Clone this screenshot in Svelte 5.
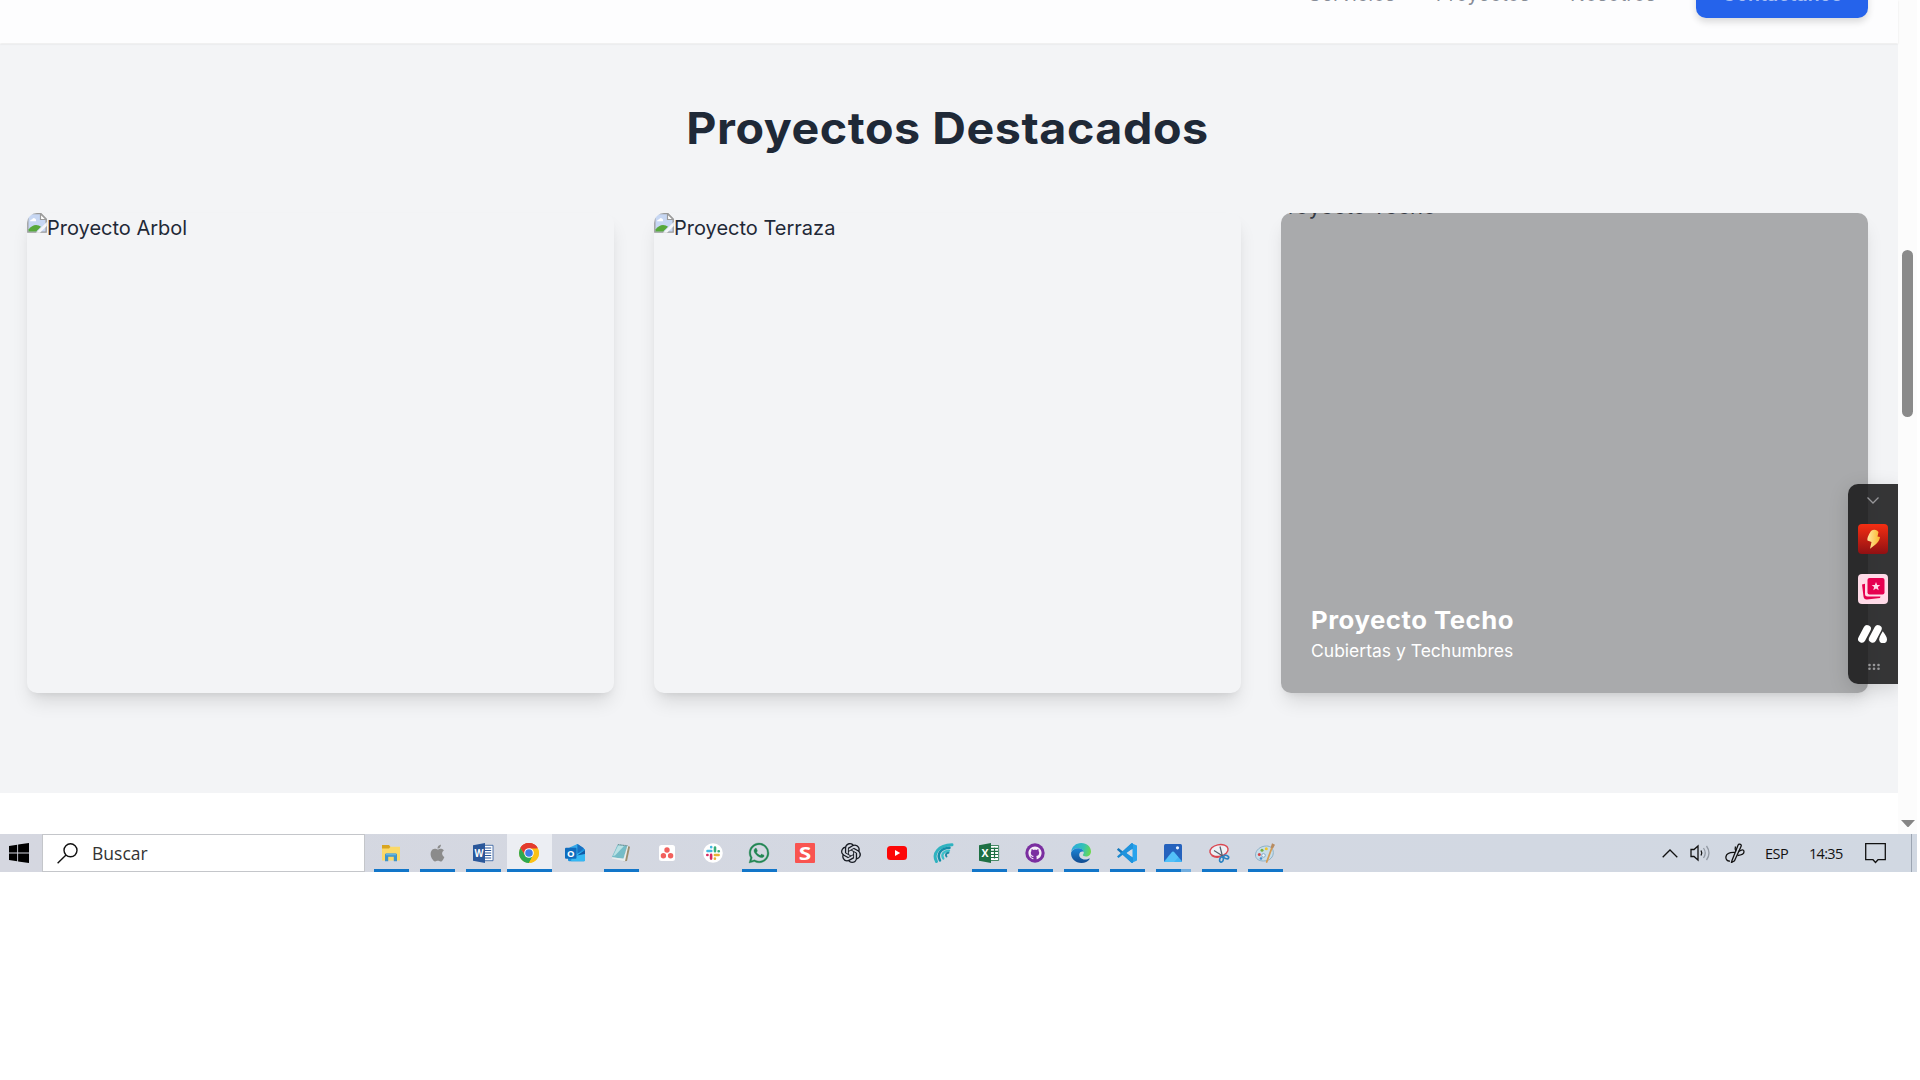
<script>
  const nav = ['Servicios', 'Proyectos', 'Nosotros'];
  const cards = [
    { alt: 'Proyecto Arbol' },
    { alt: 'Proyecto Terraza' },
    { alt: 'Proyecto Techo', title: 'Proyecto Techo', text: 'Cubiertas y Techumbres' }
  ];
  const apps = [
    { id: 'explorer', open: true },
    { id: 'apple', open: true },
    { id: 'word', open: true },
    { id: 'chrome', open: true, active: true },
    { id: 'outlook' },
    { id: 'notepad', open: true },
    { id: 'asana' },
    { id: 'slack' },
    { id: 'whatsapp', open: true },
    { id: 'snagit' },
    { id: 'openai' },
    { id: 'youtube' },
    { id: 'waves' },
    { id: 'excel', open: true },
    { id: 'github', open: true },
    { id: 'edge', open: true },
    { id: 'vscode', open: true },
    { id: 'photos', open: true, multi: true },
    { id: 'snip', open: true },
    { id: 'paint', open: true }
  ];
</script>

{#snippet icon(id)}
  <svg class="app-icon" viewBox="0 0 20 20">
    {#if id === 'explorer'}
      <path d="M1 2h7l1.500 2H18v4H1z" fill="#d9a520" />
      <path d="M1 5.500h7l1.500-1.700H19V17.500H1z" fill="#fbd968" />
      <path d="M4 18.300v-6.500q0-1.300 1.300-1.300h9.400q1.300 0 1.300 1.300v6.500h-3.200v-4.600H7.200v4.600z" fill="#3f93c9" />
      <path d="M5 10.500h10v1.800H5z" fill="#66b5dc" />
    {:else if id === 'apple'}
      <g transform="translate(2.100 1.700) scale(.7)" fill="#8b8b8b">
        <path d="M12.152 6.896c-.948 0-2.415-1.078-3.960-1.040-2.040.027-3.910 1.183-4.961 3.014-2.117 3.675-.546 9.103 1.519 12.090 1.013 1.454 2.208 3.090 3.792 3.039 1.520-.065 2.090-.987 3.935-.987 1.831 0 2.350.987 3.960.948 1.637-.026 2.676-1.480 3.676-2.948 1.156-1.688 1.636-3.325 1.662-3.415-.039-.013-3.182-1.221-3.220-4.857-.026-3.040 2.480-4.494 2.597-4.559-1.429-2.090-3.623-2.324-4.390-2.376-2-.156-3.675 1.090-4.610 1.090zM15.530 3.830c.843-1.012 1.400-2.427 1.245-3.830-1.207.052-2.662.805-3.532 1.818-.780.896-1.454 2.338-1.273 3.714 1.338.104 2.715-.688 3.559-1.701" />
      </g>
    {:else if id === 'word'}
      <path d="M11 2.300h9v15.400h-9z" fill="#fff" stroke="#2a579a" stroke-width=".8" />
      <path d="M12 5h6.200M12 7.500h6.200M12 10h6.200M12 12.500h6.200M12 15h6.200" stroke="#2a579a" stroke-width="1.100" />
      <path d="M0 2.200 12 0v20L0 17.800z" fill="#2a579a" />
      <text x="6" y="13.800" class="glyph" font-size="10.500" textLength="9" lengthAdjust="spacingAndGlyphs">W</text>
    {:else if id === 'chrome'}
      <circle cx="10" cy="10" r="10" fill="#fbc116" />
      <path d="M10 10 1.340 5A10 10 0 0 1 18.660 5z" fill="#e33b2e" />
      <path d="M10 5.400h8.900A10 10 0 0 0 1.340 5L6 12.300z" fill="#e33b2e" />
      <path d="M1.340 5A10 10 0 0 0 10 20l4-7.700-8 0z" fill="#2da94f" />
      <path d="M10 20a10 10 0 0 0 8.900-14.600H10l4 7z" fill="#fbc116" />
      <circle cx="10" cy="10" r="4.800" fill="#fff" />
      <circle cx="10" cy="10" r="3.800" fill="#3f7de8" />
    {:else if id === 'outlook'}
      <path d="M3 7.500 12.500 1 20 6.500V17q0 1.300-1.200 1.300H4.500Q3 18.300 3 17z" fill="#1590df" />
      <path d="M4.500 4.500 12.500 1v10h-8z" fill="#36a8e8" />
      <path d="M12.500 1 19 5.300 12.500 11z" fill="#1971c2" />
      <path d="M20 7v10.500q0 .8-1 .8H6l1-4.800z" fill="#35b8f3" />
      <path d="M12 12.500 20 7v4z" fill="#105ca7" />
      <rect x="0" y="4.800" width="11.500" height="11" rx="1" fill="#0f6cbd" />
      <text x="5.700" y="13.700" class="glyph" font-size="9.500">O</text>
    {:else if id === 'notepad'}
      <path d="m15.500 2.500 3.500 1.200-3 14.300-3.500.3z" fill="#9c8d6c" />
      <path d="M6.800 1.200 16.500 2.500 12.500 15.800.8 14.300z" fill="#75bcc7" />
      <path d="M7.200 2.300 13 3 4 12.500 2 13z" fill="#b9e1e4" />
      <path d="m1 14.300 11.500 1.500 3.800-13 1 .3-3.300 15.200L1 15.600z" fill="#e8eeee" />
      <path d="m7 1.600 9.600 1.200" stroke="#788f92" stroke-width="1.200" stroke-dasharray="1 .7" />
    {:else if id === 'asana'}
      <rect x="2" y="2" width="16" height="16" rx="2.500" fill="#fff" />
      <circle cx="10" cy="7" r="2.700" fill="#f2605d" />
      <circle cx="6.400" cy="12.800" r="2.700" fill="#f2605d" />
      <circle cx="13.600" cy="12.800" r="2.700" fill="#f2605d" />
    {:else if id === 'slack'}
      <circle cx="10" cy="10" r="9.800" fill="#fff" />
      <g stroke-width="2.600" stroke-linecap="round">
        <path d="M4.500 8h3.800M8.200 4v.2" stroke="#41b9df" />
        <path d="M12 4.500v3.700M15.800 8.200h-.2" stroke="#38ad79" />
        <path d="M11.900 12h3.700M11.900 15.700v-.2" stroke="#e7b036" />
        <path d="M8.100 11.900v3.700M4.300 12h.2" stroke="#d72860" />
      </g>
    {:else if id === 'whatsapp'}
      <g transform="scale(.833)" fill="#218653" stroke="#218653" stroke-width=".4">
        <path d="M17.472 14.382c-.297-.149-1.758-.867-2.030-.967-.273-.099-.471-.148-.670.150-.197.297-.767.966-.940 1.164-.173.199-.347.223-.644.075-.297-.150-1.255-.463-2.390-1.475-.883-.788-1.480-1.761-1.653-2.059-.173-.297-.018-.458.130-.606.134-.133.298-.347.446-.520.149-.174.198-.298.298-.497.099-.198.050-.371-.025-.520-.075-.149-.669-1.612-.916-2.207-.242-.579-.487-.500-.669-.510-.173-.008-.371-.010-.570-.010-.198 0-.520.074-.792.372-.272.297-1.040 1.016-1.040 2.479 0 1.462 1.065 2.875 1.213 3.074.149.198 2.096 3.200 5.077 4.487.709.306 1.262.489 1.694.625.712.227 1.360.195 1.871.118.571-.085 1.758-.719 2.006-1.413.248-.694.248-1.289.173-1.413-.074-.124-.272-.198-.570-.347m-5.421 7.403h-.004a9.870 9.870 0 01-5.031-1.378l-.361-.214-3.741.982.998-3.648-.235-.374a9.860 9.860 0 01-1.510-5.260c.001-5.450 4.436-9.884 9.888-9.884 2.640 0 5.122 1.030 6.988 2.898a9.825 9.825 0 012.893 6.994c-.003 5.450-4.437 9.884-9.885 9.884m8.413-18.297A11.815 11.815 0 0012.050 0C5.495 0 .160 5.335.157 11.892c0 2.096.547 4.142 1.588 5.945L.057 24l6.305-1.654a11.882 11.882 0 005.683 1.448h.005c6.554 0 11.890-5.335 11.893-11.893a11.821 11.821 0 00-3.480-8.413Z" />
      </g>
    {:else if id === 'snagit'}
      <rect width="20" height="20" rx="1" fill="#f95450" />
      <text x="10" y="16.500" class="glyph" font-size="18" textLength="12.500" lengthAdjust="spacingAndGlyphs">S</text>
    {:else if id === 'openai'}
      <g transform="scale(.833)" fill="#161a22">
        <path d="M22.2819 9.8211a5.9847 5.9847 0 0 0-.5157-4.9108 6.0462 6.0462 0 0 0-6.5098-2.9A6.0651 6.0651 0 0 0 4.9807 4.1818a5.9847 5.9847 0 0 0-3.9977 2.9 6.0462 6.0462 0 0 0 .7427 7.0966 5.98 5.98 0 0 0 .511 4.9107 6.051 6.051 0 0 0 6.5146 2.9001A5.9847 5.9847 0 0 0 13.2599 24a6.0557 6.0557 0 0 0 5.7718-4.2058 5.9894 5.9894 0 0 0 3.9977-2.9001 6.0557 6.0557 0 0 0-.7475-7.0729zm-9.022 12.6081a4.4755 4.4755 0 0 1-2.8764-1.0408l.1419-.0804 4.7783-2.7582a.7948.7948 0 0 0 .3927-.6813v-6.7369l2.02 1.1686a.071.071 0 0 1 .038.052v5.5826a4.504 4.504 0 0 1-4.4945 4.4944zm-9.6607-4.1254a4.4708 4.4708 0 0 1-.5346-3.0137l.142.0852 4.783 2.7582a.7712.7712 0 0 0 .7806 0l5.8428-3.3685v2.3324a.0804.0804 0 0 1-.0332.0615L9.74 19.9502a4.4992 4.4992 0 0 1-6.1408-1.6464zM2.3408 7.8956a4.485 4.485 0 0 1 2.3655-1.9728V11.6a.7664.7664 0 0 0 .3879.6765l5.8144 3.3543-2.0201 1.1685a.0757.0757 0 0 1-.071 0l-4.8303-2.7865A4.504 4.504 0 0 1 2.3408 7.872zm16.5963 3.8558L13.1038 8.364 15.1192 7.2a.0757.0757 0 0 1 .071 0l4.8303 2.7913a4.4944 4.4944 0 0 1-.6765 8.1042v-5.6772a.79.79 0 0 0-.407-.667zm2.0107-3.0231l-.142-.0852-4.7735-2.7818a.7759.7759 0 0 0-.7854 0L9.409 9.2297V6.8974a.0662.0662 0 0 1 .0284-.0615l4.8303-2.7866a4.4992 4.4992 0 0 1 6.6802 4.66zM8.3065 12.863l-2.02-1.1638a.0804.0804 0 0 1-.038-.0567V6.0742a4.4992 4.4992 0 0 1 7.3757-3.4537l-.142.0805L8.704 5.459a.7948.7948 0 0 0-.3927.6813zm1.0976-2.3654l2.602-1.4998 2.6069 1.4998v2.9994l-2.5974 1.4997-2.6067-1.4997Z" />
      </g>
    {:else if id === 'youtube'}
      <rect y="3" width="20" height="14" rx="3.500" fill="#fd0707" />
      <path d="m8 7 5.200 3L8 13z" fill="#fff" />
    {:else if id === 'waves'}
      <g fill="none" stroke-linecap="round">
        <path d="M3.500 18.500C-.5 11 5 2 19 1.700" stroke="#2fb3c0" stroke-width="3" />
        <path d="M7 17.500C3.500 10.500 8 5.300 16.500 4.800" stroke="#138ea8" stroke-width="2.500" />
        <path d="M10.300 15.500C7.800 11.300 10.500 8.300 16 7.600" stroke="#3cc0c9" stroke-width="2.300" />
        <path d="M13.500 13.500c-1.500-2 0-3.500 2-3.800" stroke="#1a8ba4" stroke-width="1.900" />
      </g>
    {:else if id === 'excel'}
      <path d="M11 2.500h8.600v15H11z" fill="#fff" stroke="#1e7044" stroke-width=".8" />
      <path d="M12 5.400h7M12 8.400h7M12 11.500h7M12 14.500h7M15.500 4.500v11" stroke="#1e7044" stroke-width="1.200" />
      <path d="M0 2.200 12 0v20L0 17.800z" fill="#1e7044" />
      <text x="6" y="13.900" class="glyph" font-size="10.500">X</text>
    {:else if id === 'github'}
      <circle cx="10" cy="10" r="9.700" fill="#7a2ea0" />
      <g transform="translate(3.400 3.300) scale(.55)" fill="#f4edf7">
        <path d="M12 .297c-6.630 0-12 5.373-12 12 0 5.303 3.438 9.800 8.205 11.385.600.113.820-.258.820-.577 0-.285-.010-1.040-.015-2.040-3.338.724-4.042-1.610-4.042-1.610C4.422 18.070 3.633 17.700 3.633 17.700c-1.087-.744.084-.729.084-.729 1.205.084 1.838 1.236 1.838 1.236 1.070 1.835 2.809 1.305 3.495.998.108-.776.417-1.305.760-1.605-2.665-.300-5.466-1.332-5.466-5.930 0-1.310.465-2.380 1.235-3.220-.135-.303-.540-1.523.105-3.176 0 0 1.005-.322 3.300 1.230.960-.267 1.980-.399 3-.405 1.020.006 2.040.138 3 .405 2.280-1.552 3.285-1.230 3.285-1.230.645 1.653.240 2.873.120 3.176.765.840 1.230 1.910 1.230 3.220 0 4.610-2.805 5.625-5.475 5.920.420.360.810 1.096.810 2.220 0 1.606-.015 2.896-.015 3.286 0 .315.210.690.825.570C20.565 22.092 24 17.592 24 12.297c0-6.627-5.373-12-12-12" />
      </g>
    {:else if id === 'edge'}
      <defs>
        <linearGradient id="edge-top" x1="0" y1=".3" x2="1" y2=".5">
          <stop offset="0" stop-color="#2aa9e0" /><stop offset=".6" stop-color="#35c2b5" /><stop offset="1" stop-color="#6bd94e" />
        </linearGradient>
        <linearGradient id="edge-low" x1="0" y1="0" x2="0" y2="1">
          <stop offset="0" stop-color="#1b86d8" /><stop offset="1" stop-color="#124a8f" />
        </linearGradient>
      </defs>
      <path d="M.200 8.500C1 3.500 5 0 10.200 0 16 0 20 4 20 8.500c0 3-2.300 5-5 5-2 0-3.200-.7-3.200-1.400 0-.6 1-1 1-2.600C12.800 7 10 5.200 7 5.200 3.800 5.200 1.500 6.600.200 8.500z" fill="url(#edge-top)" />
      <path d="M.1 9.500C1 6.800 3.800 5.200 7 5.200c3 0 5.600 1.600 5.800 3.800C11.500 8 8.800 8.600 8.300 11c-.6 3 2.200 5.500 5.700 5.500 2 0 3.500-.6 4.300-1 .4-.2.6.1.4.4C17 18.500 13.900 20 10.500 20 4.500 20-.5 15.500.1 9.500z" fill="url(#edge-low)" />
    {:else if id === 'vscode'}
      <path d="m0 6.500 1.500-1.400L16 16.500V19l-1 .7L.2 6.900z" fill="#1478bd" />
      <path d="M0 13.500 14.500.2 16 1v3L1.500 15z" fill="#1a89d0" />
      <path d="M14.500.2 20 2.500v15L14.500 20q1 0 1-1.500v-17Q15.500.2 14.500.2z" fill="#28a3ed" />
      <path d="m14.500.2 1.500 0v5.500L10 10l6 4.500V20h-1.500L5.500 11.500 4 10l1.500-1.500z" fill="#1f93dd" />
      <path d="M14.700 6.200v7.600L9.600 10z" fill="#d5dae4" />
    {:else if id === 'photos'}
      <rect x="1" y="1" width="18" height="18" rx="1.500" fill="#2562bd" />
      <path d="M1 18.500 9 9q1-1 2 0l8 9.200q0 .8-1 .8H2q-1 0-1-.5z" fill="#40b5f5" />
      <path d="m6 12.500 3-3.500q1-1 2 0l4.500 5.200L11 19H2z" fill="#65cdfb" opacity=".5" />
      <circle cx="14.500" cy="4.800" r="1.600" fill="#e8f3ff" />
    {:else if id === 'snip'}
      <ellipse cx="10" cy="7.500" rx="9.200" ry="5.800" transform="rotate(-12 10 7.500)" fill="#edf0f5" stroke="#da4650" stroke-width="1.400" />
      <path d="M2.500 12.500q5 3.500 11 .5" fill="none" stroke="#da4650" stroke-width="1.200" />
      <path d="m5 7.500 9.500 6M11 3.500l2.500 10" stroke="#53606e" stroke-width="1.200" />
      <ellipse cx="12.500" cy="16.500" rx="1.800" ry="2.700" transform="rotate(15 12.500 16.500)" fill="none" stroke="#2b82c1" stroke-width="1.600" />
      <ellipse cx="17.200" cy="14" rx="2.600" ry="1.700" transform="rotate(20 17.200 14)" fill="none" stroke="#2b82c1" stroke-width="1.600" />
    {:else if id === 'paint'}
      <path d="M11.500 3C5 3 .5 7.500.5 12c0 4 3.500 6 8 6 7 0 9.800-4.500 9.800-8.500C18.300 5.500 15.500 3 11.500 3z" fill="#c7dde9" stroke="#7ba6bf" stroke-width=".8" />
      <circle cx="4.300" cy="11.500" r="1.500" fill="#d44545" />
      <circle cx="7" cy="7.300" r="1.500" fill="#78af42" />
      <circle cx="11.300" cy="5.800" r="1.500" fill="#efc42c" />
      <circle cx="8.500" cy="12.400" r="1.800" fill="#f1f5f9" stroke="#6c9bbc" stroke-width=".8" />
      <circle cx="6" cy="15.500" r="1.300" fill="#4b8ece" />
      <path d="M17 4.500 11.700 19" stroke="#d69c54" stroke-width="1.800" stroke-linecap="round" />
      <path d="M15.700 4.500 17 .3l3 1.400L18 5.500z" fill="#b88c61" />
    {/if}
  </svg>
{/snippet}

<div class="browser">
  <main class="page">
    <header>
      <nav>
        {#each nav as item}<a href="#top">{item}</a>{/each}
      </nav>
      <button class="cta">Contáctanos</button>
    </header>

    <section class="projects">
      <h2>Proyectos Destacados</h2>
      <div class="grid">
        {#each cards as card}
          <article class:hovered={card.title}>
            <div class="media">
              {#if !card.title}
                <svg class="broken" viewBox="0 0 20 20">
                  <path d="M.8 19.200V4Q1 1 5 .7h9L19.200 6v13.200z" fill="#c7d7f3" stroke="#9a9a9a" stroke-width="1.300" />
                  <path d="M3 8.200q.3-2 2-1.600 1-2.600 3-1.200 1.500.6 1 2.800z" fill="#fff" />
                  <path d="M1.500 18.500v-2q3.500-4.500 7.500-4.500 3 0 5 1.800l-4.800 4.700z" fill="#57a83b" />
                  <path d="M9 19.800 19.800 9v4L13 19.800z" fill="#f5f6f8" />
                  <path d="M13.500.8v5.700h5.700z" fill="#fff" stroke="#9a9a9a" stroke-width="1.200" />
                </svg>
              {/if}
              <span>{card.alt}</span>
            </div>
            {#if card.title}
              <div class="overlay">
                <h3>{card.title}</h3>
                <p>{card.text}</p>
              </div>
            {/if}
          </article>
        {/each}
      </div>
    </section>
  </main>

  <div class="scrollbar">
    <div class="thumb"></div>
    <svg class="arrow" viewBox="0 0 14 7"><path d="M0 0h14L7.500 7h-1z" fill="#858585" /></svg>
  </div>

  <aside class="dock">
    <svg viewBox="0 0 50 200">
      <defs>
        <linearGradient id="flash" x1="0" y1="0" x2="0" y2="1">
          <stop offset="0" stop-color="#f52e12" /><stop offset="1" stop-color="#8f1013" />
        </linearGradient>
        <linearGradient id="bolt" x1="0" y1="0" x2="1" y2="0">
          <stop offset="0" stop-color="#ffe9a3" /><stop offset="1" stop-color="#fbb72c" />
        </linearGradient>
      </defs>
      <path d="m19.500 13.500 5.500 5.500 5.500-5.500" fill="none" stroke="#97979a" stroke-width="1.300" />
      <rect x="10" y="40" width="30" height="30" rx="4" fill="url(#flash)" />
      <path d="M23 47q3-2 6-.5l1.500 1.500-1 4.500 2.500.5q-.5 4-4.500 7.500L22 64.800l1.500-6.800-4-1.500q-.8-3 3.500-9.500z" fill="url(#bolt)" />
      <rect x="10" y="90" width="30" height="30" rx="4" fill="#ffdbe8" />
      <path d="m14 100.500 3-.8v10.300q0 2.500 2.500 2.500h13l-.5 1.500-13 1.500q-3 .2-3.500-3z" fill="#e60050" />
      <rect x="19.500" y="94" width="17" height="16.500" rx="2" fill="#e60050" />
      <path d="m28 98 1.200 2.900 3.100.2-2.400 2 .8 3.100-2.700-1.700-2.700 1.700.8-3.100-2.400-2 3.100-.2z" fill="#ffdbe8" />
      <g stroke="#fff" stroke-linecap="round" stroke-width="7.400">
        <path d="m13.800 155 5.400-10.200M24.600 155l5.400-10.200" />
      </g>
      <path d="M34.800 147.200q4.200 5.600 4.200 8a3.800 3.800 0 0 1-7.800 0q0-2.400 3.600-8z" fill="#fff" />
      <g fill="#98989a">
        <circle cx="21.500" cy="181" r="1.300" /><circle cx="26" cy="181" r="1.300" /><circle cx="30.500" cy="181" r="1.300" />
        <circle cx="21.500" cy="184.800" r="1.300" /><circle cx="26" cy="184.800" r="1.300" /><circle cx="30.500" cy="184.800" r="1.300" />
      </g>
    </svg>
  </aside>
</div>

<footer class="taskbar">
  <div class="start">
    <svg viewBox="0 0 20 20"><path d="M0 2.900 8.200 1.800v7.700H0zM9.100 1.600 20 0v9.500H9.100zM0 10.400h8.200v7.800L0 17zM9.100 10.400H20V20L9.100 18.400z" fill="#000" /></svg>
  </div>
  <div class="search">
    <svg viewBox="0 0 21 21"><circle cx="13.500" cy="7.300" r="6.500" /><path d="m9 12-8.400 8.200" /></svg>
    <span>Buscar</span>
  </div>
  <div class="apps">
    {#each apps as app}
      <div class="app" class:open={app.open} class:active={app.active} class:multi={app.multi}>
        {@render icon(app.id)}
      </div>
    {/each}
  </div>
  <div class="tray">
    <svg class="up" viewBox="0 0 16 9"><path d="m.7 8.300 7.300-7.300 7.300 7.300" /></svg>
    <svg class="volume" viewBox="0 0 21 18">
      <path d="M1 5.500h3L8 2v14l-4-3.500H1z" />
      <path d="M11 6.500q1.600 2.500 0 5" />
      <path class="faint" d="M13.500 4q3.500 5 0 10M16.500 2q5 7 0 14" />
    </svg>
    <svg class="pen" viewBox="0 0 20 20">
      <path d="M10 9.500Q2 9 1 13.500c-.6 3 1.500 5 4 4.500M7 17.500 13 2.200q.8-1.700 2.400-.9 1.300.8.6 2.300L9.500 17.800 6.500 19.500z" />
      <path d="M13.500 8.500q5.500-3.500 5.500.3 0 3.200-6.500 3.700M10.500 3.500q-1 3 .5 5" />
    </svg>
    <span class="lang">ESP</span>
    <span class="clock">14:35</span>
    <svg class="notes" viewBox="0 0 21 21"><path d="M.7.700h19.600v16H13L10.500 19.500 8 16.700H.7z" /></svg>
    <div class="desktop"></div>
  </div>
</footer>

<style>
  :global(body) { margin: 0; background: #fff; overflow: hidden; }
  .browser {
    position: relative; display: flex; width: 1917px; height: 834px; overflow: hidden;
    font-family: Inter, "Liberation Sans", sans-serif; color: #1f2937; background: #fff;
  }
  .page { width: 1898px; }
  header {
    position: relative; z-index: 1; box-sizing: border-box; height: 43px; margin-bottom: 1px; padding-right: 30px;
    display: flex; justify-content: flex-end; align-items: flex-start; gap: 40px;
    background: #fdfdfe; box-shadow: 0 1px 2px rgba(0, 0, 0, .09);
  }
  nav { display: flex; gap: 40px; margin-top: -18px; }
  nav a { color: rgba(55, 65, 81, .6); font-size: 20px; line-height: 24px; text-decoration: none; }
  .cta {
    width: 172px; height: 55px; margin-top: -37px; padding: 6px 0 0; border: 0; border-radius: 10px;
    background: #2563eb; color: rgba(255, 255, 255, .6); font: 600 19.500px/50px Inter, sans-serif;
    box-shadow: 0 4px 7px rgba(0, 0, 0, .14);
  }
  .projects { box-sizing: border-box; height: 749px; padding: 56px 30px 0 27px; background: #f3f4f6; }
  h2 {
    margin: 0; font-size: 44px; line-height: 56px; font-weight: 700; text-align: center;
    letter-spacing: .5px; transform: scaleX(1.06);
  }
  .grid { display: grid; grid-template-columns: repeat(3, 587px); gap: 40px; margin-top: 57px; }
  article {
    position: relative; height: 480px; border-radius: 10px; overflow: hidden; background: #f3f4f6;
    box-shadow: 0 12px 19px -4px rgba(0, 0, 0, .12), 0 5px 8px -5px rgba(0, 0, 0, .1);
  }
  .media { display: flex; align-items: flex-start; font-size: 20px; line-height: 30px; height: 480px; }
  .broken { width: 20px; height: 20px; flex: none; }
  .hovered .media {
    transform: translateY(.4px) scale(1.1); padding-left: 20px; line-height: 31px; color: rgba(31, 41, 55, .8);
  }
  .overlay {
    position: absolute; inset: 0; display: flex; flex-direction: column; justify-content: flex-end;
    padding: 30px; background: rgba(0, 0, 0, .3); color: #fff;
  }
  h3 {
    margin: 0; font-size: 24.500px; line-height: 35px; font-weight: 700; letter-spacing: .5px;
    transform: scaleX(1.05); transform-origin: left;
  }
  p { margin: 0; font-size: 17.500px; line-height: 25px; }
  .scrollbar { display: flex; flex-direction: column; align-items: center; width: 19px; background: #fcfcfc; }
  .thumb { width: 11px; height: 167px; margin-top: 250px; border-radius: 6px; background: #8a8a8a; }
  .arrow { width: 14px; height: 7px; margin-top: 403px; }
  .dock {
    position: absolute; z-index: 2; right: 19px; top: 484px; width: 50px; height: 200px;
    border-radius: 10px 0 0 10px; background: rgba(21, 21, 22, .86);
    box-shadow: 0 5px 20px rgba(0, 0, 0, .15); clip-path: inset(-40px 0 -40px -40px);
  }
  .dock svg { display: block; width: 50px; height: 200px; }

  .taskbar {
    display: flex; width: 1917px; height: 38px; background: linear-gradient(90deg, #d5d7e0, #d3d8e2 60%, #d1d8e2);
    font-family: "Open Sans", "Noto Sans", sans-serif;
  }
  .start { box-sizing: border-box; width: 42px; padding: 9px 0 0 9px; }
  .start svg { display: block; width: 20px; height: 20px; }
  .search {
    box-sizing: border-box; width: 323px; display: flex; align-items: center; gap: 14px; padding-left: 14px;
    border: 1px solid #c4c6ca; background: #fff; color: #333; font-size: 17.500px; letter-spacing: 0;
  }
  .search svg { width: 21px; height: 21px; fill: none; stroke: #111; stroke-width: 1.400; }
  .apps { display: flex; gap: 1px; margin-left: 4px; }
  .app {
    box-sizing: border-box; width: 45px; height: 38px; padding-top: 9px;
    display: flex; flex-direction: column; align-items: center;
  }
  .app-icon { display: block; width: 20px; height: 20px; margin-right: 1px; overflow: visible; }
  .glyph { fill: #fff; font-family: "Open Sans", sans-serif; font-weight: 700; text-anchor: middle; }
  .open::after { content: ""; width: 35px; height: 3px; margin-top: 6px; background: #1276c9; }
  .active { background: #eceef3; }
  .active::after { width: 45px; }
  .multi::after { background: linear-gradient(90deg, #1276c9 25px, #71addf 25px); }
  .tray { display: flex; align-items: center; margin-left: auto; color: #111; font-size: 14.500px; }
  .tray svg { fill: none; stroke: #111; stroke-width: 1.300; }
  .up { width: 16px; height: 9px; }
  .volume { width: 21px; height: 18px; margin-left: 12px; }
  .tray .faint { stroke: #9299a3; }
  .pen { width: 20px; height: 20px; margin-left: 14px; }
  .lang { width: 24px; margin-left: 20px; letter-spacing: -.5px; }
  .clock { width: 34px; margin-left: 20px; letter-spacing: -.7px; }
  .notes { width: 21px; height: 21px; margin-left: 22px; }
  .desktop { width: 5px; height: 38px; margin-left: 25px; border-left: 1px solid #9ca5b2; }
</style>
